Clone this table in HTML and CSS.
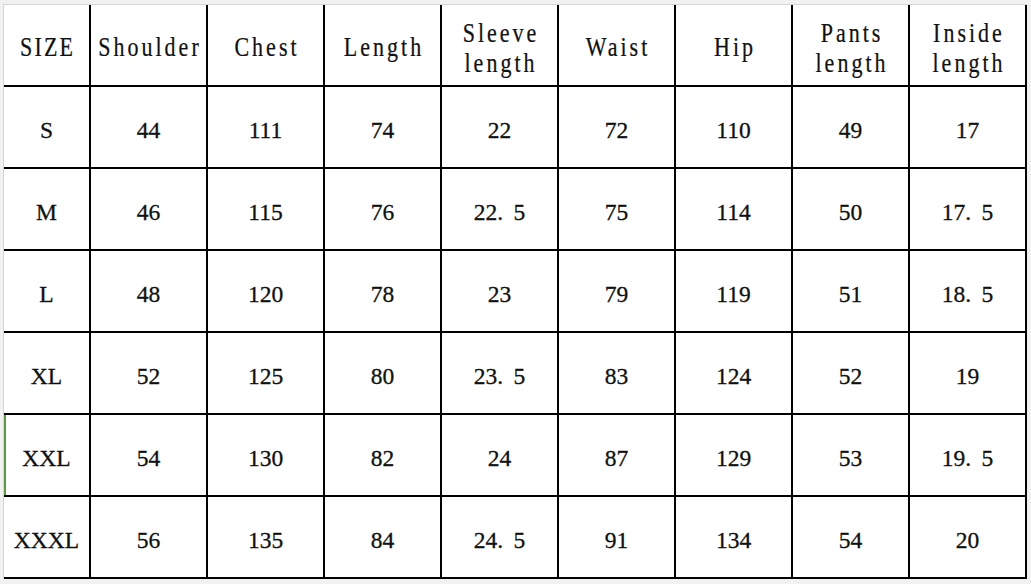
FILE: index.html
```html
<!DOCTYPE html>
<html>
<head>
<meta charset="utf-8">
<link rel="stylesheet" href="styles.css">
</head>
<body>
<div class="sheet">
  <div class="grid">
    <div class="cell head one"><span class="hd tight">SIZE</span></div>
    <div class="cell head one"><span class="hd">Shoulder</span></div>
    <div class="cell head one"><span class="hd">Chest</span></div>
    <div class="cell head one"><span class="hd">Length</span></div>
    <div class="cell head"><span class="hd">Sleeve<br>length</span></div>
    <div class="cell head one"><span class="hd">Waist</span></div>
    <div class="cell head one"><span class="hd">Hip</span></div>
    <div class="cell head"><span class="hd">Pants<br>length</span></div>
    <div class="cell head"><span class="hd">Inside<br>length</span></div>

    <div class="cell">S</div><div class="cell">44</div><div class="cell">111</div><div class="cell">74</div><div class="cell">22</div><div class="cell">72</div><div class="cell">110</div><div class="cell">49</div><div class="cell">17</div>

    <div class="cell">M</div><div class="cell">46</div><div class="cell">115</div><div class="cell">76</div><div class="cell">22<span class="dot">.</span>5</div><div class="cell">75</div><div class="cell">114</div><div class="cell">50</div><div class="cell">17<span class="dot">.</span>5</div>

    <div class="cell">L</div><div class="cell">48</div><div class="cell">120</div><div class="cell">78</div><div class="cell">23</div><div class="cell">79</div><div class="cell">119</div><div class="cell">51</div><div class="cell">18<span class="dot">.</span>5</div>

    <div class="cell">XL</div><div class="cell">52</div><div class="cell">125</div><div class="cell">80</div><div class="cell">23<span class="dot">.</span>5</div><div class="cell">83</div><div class="cell">124</div><div class="cell">52</div><div class="cell">19</div>

    <div class="cell marked">XXL</div><div class="cell">54</div><div class="cell">130</div><div class="cell">82</div><div class="cell">24</div><div class="cell">87</div><div class="cell">129</div><div class="cell">53</div><div class="cell">19<span class="dot">.</span>5</div>

    <div class="cell">XXXL</div><div class="cell">56</div><div class="cell">135</div><div class="cell">84</div><div class="cell">24<span class="dot">.</span>5</div><div class="cell">91</div><div class="cell">134</div><div class="cell">54</div><div class="cell">20</div>
  </div>
</div>
</body>
</html>
```

FILE: styles.css
```css
html, body {
  margin: 0;
  padding: 0;
  background: #f1f1f1;
  width: 1031px;
  height: 584px;
  overflow: hidden;
}

.sheet {
  padding-top: 4px;
  padding-left: 3px;
}

.grid {
  display: grid;
  grid-template-columns: 87px repeat(8, 117px);
  grid-template-rows: 82px repeat(6, 82px);
  width: 1023px;
  background: #ffffff;
  border-top: 1px solid #d6d6d6;
  border-left: 1px solid #d6d6d6;
}

.cell {
  box-sizing: border-box;
  border-right: 2px solid #000;
  border-bottom: 2px solid #000;
  display: flex;
  align-items: center;
  justify-content: center;
  font-family: "Liberation Serif", "Times New Roman", serif;
  font-size: 23.5px;
  color: #111;
  padding-top: 6px;
  -webkit-text-stroke: 0.3px #111;
}

.head {
  padding-top: 6px;
  -webkit-text-stroke: 0;
}

.head.one {
  padding-top: 2px;
}

.hd {
  display: inline-block;
  font-family: "Liberation Serif", "Times New Roman", serif;
  font-size: 22px;
  letter-spacing: 3px;
  padding-left: 3px;
  line-height: 25px;
  text-align: center;
  transform: scaleY(1.2);
  color: #111;
  -webkit-text-stroke: 0.2px #111;
}

.hd.tight {
  letter-spacing: 2.2px;
  padding-left: 2.2px;
}

.dot {
  letter-spacing: 0.45em;
}

.marked {
  box-shadow: inset 2px 0 0 #5e9a45;
}
```
